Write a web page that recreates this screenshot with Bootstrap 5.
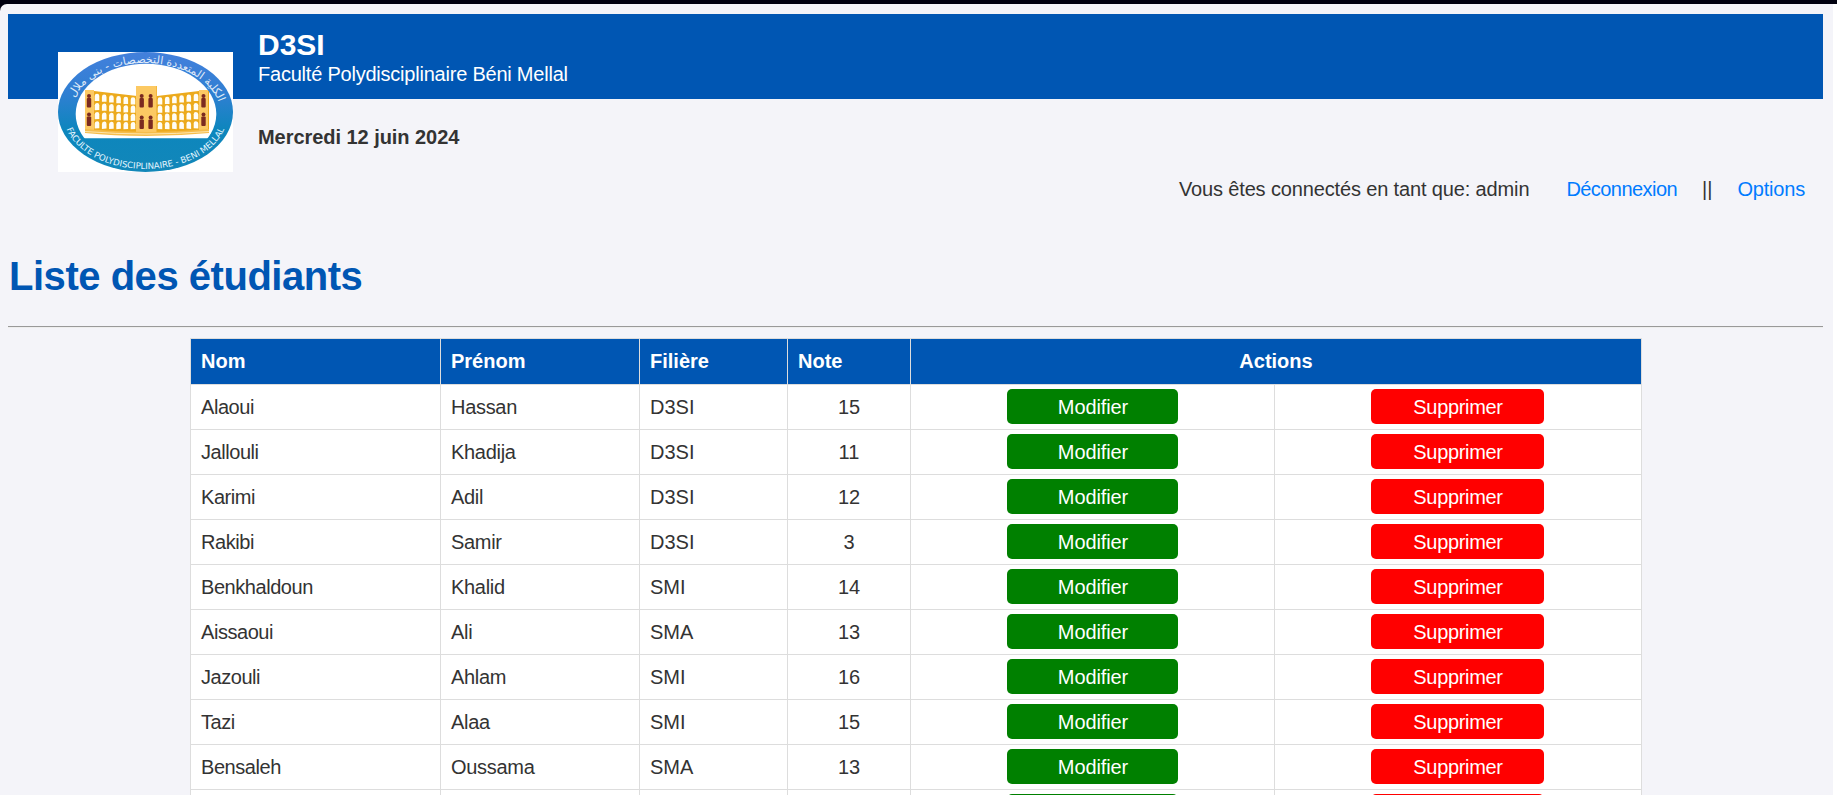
<!DOCTYPE html>
<html lang="fr">
<head>
<meta charset="utf-8">
<meta name="viewport" content="width=device-width, initial-scale=1">
<title>D3SI - Liste des étudiants</title>
<link href="https://cdn.jsdelivr.net/npm/bootstrap@5.3.0/dist/css/bootstrap.min.css" rel="stylesheet">
<style>
  html { background: #00000f; overflow: hidden; }
  body { background: #00000f; font-family: "Liberation Sans", Arial, sans-serif; font-size: 20px; line-height: 23px; color: #333; height: 795px; overflow: hidden; padding-top: 4px; }
  .page { background: #f4f4f9; height: 791px; padding: 10px 10px 0 8px; border-top-left-radius: 7px; border-right: 4px solid #fff; overflow: hidden; }
  .banner { background: #0056b3; height: 85px; padding: 12px 0 0 50px; }
  .logo { margin-top: 26px; width: 175px; height: 120px; }
  .identity { margin-left: 25px; }
  .brand { font-size: 30px; line-height: 37px; font-weight: 700; }
  .faculty { letter-spacing: -.22px; }
  .today { margin-top: 40px; color: #333; letter-spacing: -.05px; }
  .session { margin-top: 31px; padding-right: 18px; }
  .session a { color: #007bff; text-decoration: none; }
  .who { letter-spacing: -.14px; margin-right: 37px; }
  .out { letter-spacing: -.55px; }
  .bars { margin: 0 25px; }
  .opts { letter-spacing: -.2px; }
  .page-title { font-size: 40px; line-height: 46px; font-weight: 700; color: #0056b3; margin: 52px 0 27px 1px; letter-spacing: -.47px; }
  .rule { border: 0; border-top: 1px solid #999; border-bottom: 1px solid #eee; opacity: 1; margin: 0 0 10px; }
  .students { width: 1452px; table-layout: fixed; border-collapse: collapse; background: #fff; margin-left: 182px; }
  .students th, .students td { border: 1px solid #ddd; padding: 0 10px; height: 45px; vertical-align: middle; }
  .students td { letter-spacing: -.3px; }
  .students td:nth-child(3), .students td:nth-child(4) { letter-spacing: 0; }
  .students tr td:first-child { letter-spacing: -.45px; }
  .students thead th { background: #0056b3; color: #fff; height: 46px; }
  .act { display: block; margin: 0 auto 2px; height: 35px; padding: 0; border: 0; border-radius: 5px; color: #fff; font-size: 20px; line-height: 37px; text-align: center; text-decoration: none; }
  .act-edit { width: 171px; background: #008000; letter-spacing: -.1px; padding-left: 1px; }
  .act-del { width: 173px; background: #f00; letter-spacing: -.33px; padding-left: 1px; margin-left: 86px; }
</style>
</head>
<body>
<div class="page">
  <header class="banner d-flex align-items-start text-white">
    <svg class="logo flex-shrink-0" viewBox="0 0 175 120" role="img" aria-label="Logo de la faculté">
      <defs>
        <linearGradient id="ring" x1="0" y1="0" x2="0" y2="1">
          <stop offset="0" stop-color="#4380dc"/><stop offset=".35" stop-color="#2f7fd2"/><stop offset=".65" stop-color="#0d86bd"/><stop offset="1" stop-color="#1287b9"/>
        </linearGradient>
        <clipPath id="sky"><rect width="175" height="86.3"/></clipPath>
        <path id="win" d="M-2.3 6.600V1.8Q-2.300-.6 0-.6T2.300 1.8V6.600z" fill="#fffdf5"/>
        <g id="winrow"><use href="#win"/><use href="#win" x="7.2" y=".9"/><use href="#win" x="14.4" y="1.6"/><use href="#win" x="21.6" y="2.3"/><use href="#win" x="28.8" y="3"/><use href="#win" x="36" y="3.6"/></g>
        <g id="wins"><use href="#winrow" y="42.3"/><g transform="translate(0 51.500) skewY(-1.500)"><use href="#winrow"/></g><g transform="translate(0 60.600) skewY(-3)"><use href="#winrow"/></g><g transform="translate(0 69.800) skewY(-4.500)"><use href="#winrow"/></g></g>
        <g id="fig" fill="#7b2a20"><circle cx="0" cy="2" r="2"/><rect x="-2.2" y="4" width="4.400" height="9.6" rx="1"/></g>
        <path id="arcTop" d="M14 75A75.500 52 0 1 1 161 75"/>
        <path id="arcBottom" d="M6 63.500A81.500 53.500 0 0 0 169 63.500"/>
      </defs>
      <rect width="175" height="120" fill="#fff"/>
      <ellipse cx="87.500" cy="60" rx="87.500" ry="60" fill="url(#ring)"/>
      <ellipse cx="88" cy="62" rx="70.300" ry="50.300" fill="#fff" clip-path="url(#sky)"/>
      <path d="M27 39h9l43 5V34h20v10l42-5h10v39q-30 5-62 5t-62-4z" fill="#ecaa1c"/>
      <path d="M27 38h9v42h-9zM141 38h9v42h-9zM78 34h20.500v48H78z" fill="#fcc963"/>
      <path d="M27 77q31 3 61 3t63-3v4q-31 3-63 3t-61-3z" fill="#f6bd4b"/>
      <path d="M27 79.500q31 2.500 61 2.500t63-2.500" fill="none" stroke="#fff0c8" stroke-width=".8"/>
      <use href="#wins" x="39"/>
      <g transform="translate(138 0) scale(-1 1)"><use href="#wins"/></g>
      <use href="#fig" x="31" y="42"/><use href="#fig" x="31" y="60.500"/><use href="#fig" x="145.500" y="42"/><use href="#fig" x="145.500" y="60.500"/>
      <use href="#fig" x="83.700" y="42"/><use href="#fig" x="92.600" y="42"/><use href="#fig" x="83.700" y="63.500"/><use href="#fig" x="92.600" y="63.500"/>
      <text fill="#fff" font-family="DejaVu Sans, sans-serif" font-size="11" text-anchor="middle" opacity=".85"><textPath href="#arcTop" startOffset="51%">الكلية المتعددة التخصصات - بني ملال</textPath></text>
      <text fill="#e6f6ff" font-family="DejaVu Sans, sans-serif" font-size="8.600" text-anchor="middle"><textPath href="#arcBottom" startOffset="50%" textLength="186">FACULTE POLYDISCIPLINAIRE - BENI MELLAL</textPath></text>
    </svg>
    <div class="identity">
      <div class="brand">D3SI</div>
      <div class="faculty">Faculté Polydisciplinaire Béni Mellal</div>
      <div class="today fw-bold">Mercredi 12 juin 2024</div>
    </div>
  </header>
  <div class="pt-5"></div>
  <nav class="session d-flex justify-content-end">
    <span class="who">Vous êtes connectés en tant que: admin</span>
    <a class="out" href="#">Déconnexion</a>
    <span class="bars">||</span>
    <a class="opts" href="#">Options</a>
  </nav>
  <h1 class="page-title">Liste des étudiants</h1>
  <hr class="rule">
  <table class="students">
    <colgroup><col style="width:250px"><col style="width:199px"><col style="width:148px"><col style="width:123px"><col style="width:364px"><col style="width:367px"></colgroup>
    <thead>
      <tr><th>Nom</th><th>Prénom</th><th>Filière</th><th>Note</th><th colspan="2" class="text-center">Actions</th></tr>
    </thead>
    <tbody>
      <tr><td>Alaoui</td><td>Hassan</td><td>D3SI</td><td class="text-center">15</td><td><a class="act act-edit" href="#">Modifier</a></td><td><a class="act act-del" href="#">Supprimer</a></td></tr>
      <tr><td>Jallouli</td><td>Khadija</td><td>D3SI</td><td class="text-center">11</td><td><a class="act act-edit" href="#">Modifier</a></td><td><a class="act act-del" href="#">Supprimer</a></td></tr>
      <tr><td>Karimi</td><td>Adil</td><td>D3SI</td><td class="text-center">12</td><td><a class="act act-edit" href="#">Modifier</a></td><td><a class="act act-del" href="#">Supprimer</a></td></tr>
      <tr><td>Rakibi</td><td>Samir</td><td>D3SI</td><td class="text-center">3</td><td><a class="act act-edit" href="#">Modifier</a></td><td><a class="act act-del" href="#">Supprimer</a></td></tr>
      <tr><td>Benkhaldoun</td><td>Khalid</td><td>SMI</td><td class="text-center">14</td><td><a class="act act-edit" href="#">Modifier</a></td><td><a class="act act-del" href="#">Supprimer</a></td></tr>
      <tr><td>Aissaoui</td><td>Ali</td><td>SMA</td><td class="text-center">13</td><td><a class="act act-edit" href="#">Modifier</a></td><td><a class="act act-del" href="#">Supprimer</a></td></tr>
      <tr><td>Jazouli</td><td>Ahlam</td><td>SMI</td><td class="text-center">16</td><td><a class="act act-edit" href="#">Modifier</a></td><td><a class="act act-del" href="#">Supprimer</a></td></tr>
      <tr><td>Tazi</td><td>Alaa</td><td>SMI</td><td class="text-center">15</td><td><a class="act act-edit" href="#">Modifier</a></td><td><a class="act act-del" href="#">Supprimer</a></td></tr>
      <tr><td>Bensaleh</td><td>Oussama</td><td>SMA</td><td class="text-center">13</td><td><a class="act act-edit" href="#">Modifier</a></td><td><a class="act act-del" href="#">Supprimer</a></td></tr>
      <tr><td></td><td></td><td></td><td></td><td><a class="act act-edit" href="#"></a></td><td><a class="act act-del" href="#"></a></td></tr>
    </tbody>
  </table>
</div>
<script src="https://cdn.jsdelivr.net/npm/bootstrap@5.3.0/dist/js/bootstrap.bundle.min.js"></script>
</body>
</html>
